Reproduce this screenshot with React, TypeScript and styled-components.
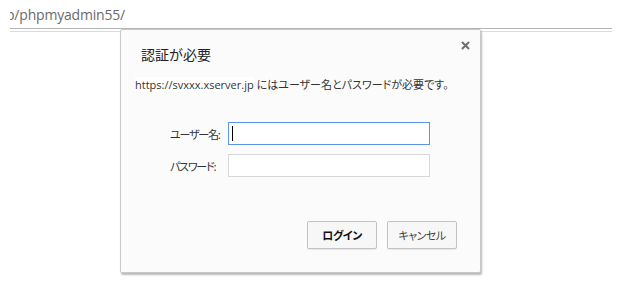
import React from "react";
import styled, { createGlobalStyle } from "styled-components";

const GlobalStyle = createGlobalStyle`
  html, body {
    margin: 0;
    padding: 0;
    background: #ffffff;
  }
  body {
    font-family: "Open Sans", "Noto Sans CJK JP", sans-serif;
  }
`;

const Page = styled.div`
  position: relative;
  width: 624px;
  height: 303px;
  overflow: hidden;
  background: #ffffff;
`;

const UrlLine = styled.div`
  height: 28px;
  padding-left: 10px;
  overflow: hidden;
`;

const UrlClip = styled.div`
  overflow: hidden;
`;

const UrlText = styled.div`
  margin-left: -4px;
  padding-top: 6px;
  font-family: "Open Sans", sans-serif;
  font-size: 14px;
  line-height: 18px;
  color: #6a6a6a;
  letter-spacing: -0.2px;
  white-space: nowrap;
`;

const Rule = styled.div`
  margin: 0 12px 0 10px;
  height: 2px;
  border-top: 1px solid #b4b4b4;
  border-bottom: 1px solid #dcdcdc;
`;

const Dialog = styled.div`
  position: absolute;
  left: 120px;
  top: 29px;
  width: 359px;
  height: 242px;
  background: #fbfbfb;
  border: 1px solid #c9c9c9;
  border-radius: 2px;
  box-shadow: 1px 2px 2px rgba(0, 0, 0, 0.28);
  display: flex;
  flex-direction: column;
`;

const CloseButton = styled.button`
  position: absolute;
  right: 9px;
  top: 9px;
  width: 12px;
  height: 12px;
  padding: 0;
  border: none;
  background: none;
  display: flex;
  align-items: center;
  justify-content: center;
`;

const Title = styled.h1`
  margin: 15px 0 0 20px;
  font-family: "Noto Sans CJK JP", sans-serif;
  font-size: 14px;
  font-weight: 400;
  line-height: 18px;
  color: #222;
`;

const Message = styled.p`
  margin: 14px 0 0 14px;
  font-size: 11px;
  line-height: 16px;
  color: #333;
  font-feature-settings: "palt";
  white-space: nowrap;
`;

const Host = styled.span`
  background: #ffffff;
  margin-right: 3px;
`;

const Form = styled.div`
  margin: 29px 0 0 49px;
  display: grid;
  grid-template-columns: 58px 202px;
  row-gap: 9px;
  align-items: center;
`;

const Label = styled.label`
  font-family: "Noto Sans CJK JP", sans-serif;
  font-size: 11px;
  letter-spacing: -1.2px;
  color: #333;
  font-feature-settings: "palt";
  white-space: nowrap;
`;

const Field = styled.div<{ $focused?: boolean }>`
  box-sizing: border-box;
  height: 23px;
  background: #ffffff;
  border: 1px solid ${(p) => (p.$focused ? "#5b94ed" : "#d8d8d8")};
  display: flex;
  align-items: center;
  padding-left: 3px;
`;

const Caret = styled.span`
  display: inline-block;
  width: 1px;
  height: 15px;
  background: #000;
`;

const Actions = styled.div`
  margin-top: 44px;
  padding-right: 23px;
  display: flex;
  justify-content: flex-end;
  gap: 10px;
`;

const Button = styled.button<{ $primary?: boolean }>`
  box-sizing: border-box;
  width: 70px;
  height: 28px;
  padding: 0;
  background: #f7f7f7;
  border: 1px solid #c3c3c3;
  border-radius: 2px;
  box-shadow: 0 1px 1px rgba(0, 0, 0, 0.08);
  font-family: "Noto Sans CJK JP", sans-serif;
  font-size: 11px;
  letter-spacing: -0.5px;
  font-weight: ${(p) => (p.$primary ? 700 : 400)};
  color: ${(p) => (p.$primary ? "#111" : "#444")};
  font-feature-settings: "palt";
`;

export default function App() {
  return (
    <Page>
      <GlobalStyle />
      <UrlLine>
        <UrlClip>
          <UrlText>p/phpmyadmin55/</UrlText>
        </UrlClip>
      </UrlLine>
      <Rule />
      <Dialog>
        <CloseButton aria-label="閉じる">
          <svg width="9" height="9" viewBox="0 0 9 9">
            <path d="M1 1 L8 8 M8 1 L1 8" stroke="#6f6f6f" strokeWidth="2" />
          </svg>
        </CloseButton>
        <Title>認証が必要</Title>
        <Message>
          <Host>https://svxxx.xserver.jp</Host>にはユーザー名とパスワードが必要です。
        </Message>
        <Form>
          <Label>ユーザー名:</Label>
          <Field $focused>
            <Caret />
          </Field>
          <Label>パスワード:</Label>
          <Field />
        </Form>
        <Actions>
          <Button $primary>ログイン</Button>
          <Button>キャンセル</Button>
        </Actions>
      </Dialog>
    </Page>
  );
}
